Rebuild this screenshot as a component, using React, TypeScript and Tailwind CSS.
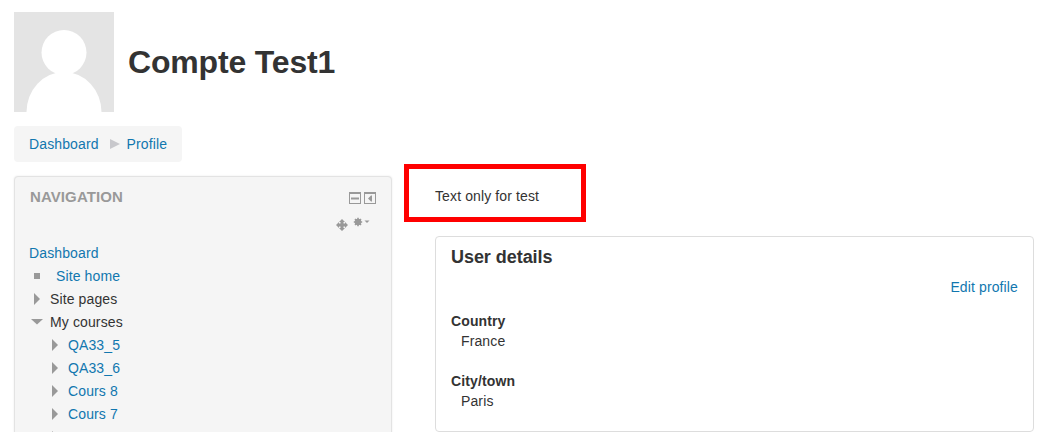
import React from 'react';

const linkClass = 'text-[#1177af]';

const Arrow = ({ open = false }: { open?: boolean }) => (
  <svg width="16" height="16" viewBox="0 0 16 16" className="shrink-0">
    {open ? <polygon points="2,5 14,5 8,10.5" fill="#999" /> : <polygon points="5,2 11,8 5,14" fill="#999" />}
  </svg>
);

const NavRow = ({ label, link = false, open = false, indent = false }: { label?: string; link?: boolean; open?: boolean; indent?: boolean }) => (
  <div className={`flex h-[23px] items-center ${indent ? 'pl-[18px]' : ''}`}>
    <span className="flex w-[21px] shrink-0"><Arrow open={open} /></span>
    {label && <span className={link ? linkClass : 'text-[#333]'}>{label}</span>}
  </div>
);

const BlockIcons = () => (
  <div className="flex h-[60px] w-[50px] flex-col items-end pt-[15px] pr-[1px]">
    <div className="flex gap-[3px]">
      <svg width="12" height="12" viewBox="0 0 12 12">
        <rect x="0.5" y="0.5" width="11" height="11" fill="none" stroke="#999" />
        <rect x="0" y="0" width="12" height="2" fill="#999" />
        <rect x="2" y="5.5" width="8" height="2" fill="#999" />
      </svg>
      <svg width="12" height="12" viewBox="0 0 12 12">
        <rect x="0.5" y="0.5" width="11" height="11" fill="none" stroke="#999" />
        <rect x="0" y="0" width="12" height="2" fill="#999" />
        <polygon points="7,3.5 4,6.5 7,9.5 8,9.5 8,3.5" fill="#999" />
      </svg>
    </div>
    <div className="mt-[13px] flex items-start pr-[6px]">
      <svg width="12" height="12" viewBox="0 0 12 12" className="mt-[2px] mr-[5px]">
        <path d="M6 0 9 3H7.5V4.5H9V3L12 6 9 9V7.5H7.5V9H9L6 12 3 9H4.5V7.5H3V9L0 6 3 3V4.5H4.5V3H3Z" fill="#999" />
      </svg>
      <svg width="10" height="10" viewBox="0 0 10 10">
        <circle cx="5" cy="5" r="2.4" fill="none" stroke="#999" strokeWidth="1.8" />
        <path d="M5 .8v8.4M.8 5h8.4M2 2l6 6M8 2l-6 6" stroke="#999" strokeWidth="1.6" />
      </svg>
      <svg width="6" height="10" viewBox="0 0 6 10" className="ml-[1px]">
        <polygon points="0.5,3.5 5.5,3.5 3,6" fill="#999" />
      </svg>
    </div>
  </div>
);

export default function App() {
  return (
    <div className="h-[432px] overflow-hidden bg-white font-['Liberation_Sans',Arial,sans-serif] text-[14px] leading-[20px] tracking-[0.12px] text-[#333]">
      <div className="relative px-[14px] pt-[12px]">
        <header className="flex items-center gap-[14px]">
          <div className="relative h-[100px] w-[100px] overflow-hidden bg-[#e4e4e4]">
            <svg width="100" height="100" viewBox="0 0 100 100">
              <circle cx="50" cy="40.5" r="22.5" fill="#fff" />
              <ellipse cx="50" cy="100" rx="37.5" ry="40" fill="#fff" />
            </svg>
          </div>
          <h1 className="text-[32px] leading-[40px] font-bold tracking-[-0.17px] text-[#333]">Compte Test1</h1>
        </header>

        <nav className="mt-[14px] flex h-[36px] w-[168px] items-center rounded-[4px] bg-[#f5f5f5] pl-[15px]">
          <a className={linkClass}>Dashboard</a>
          <svg width="12" height="12" viewBox="0 0 12 12" className="mr-[6px] ml-[10px]">
            <polygon points="1,1 11,6 1,11" fill="#c8c8cc" />
          </svg>
          <a className={linkClass}>Profile</a>
        </nav>

        <div className="mt-[14px] flex items-start">
          <aside className="h-[300px] w-[378px] shrink-0 rounded-[4px] border border-[#e3e3e3] bg-[#f5f5f5] px-[14px] shadow-[0_0_2px_rgba(0,0,0,0.1)]">
            <div className="flex justify-between">
              <h2 className="pt-[10px] pl-[1px] text-[15px] font-bold tracking-[0.1px] text-[#999] uppercase">Navigation</h2>
              <BlockIcons />
            </div>
            <div className="mt-[4px]">
              <div className="flex h-[23px] items-center"><a className={linkClass}>Dashboard</a></div>
              <div className="flex h-[23px] items-center">
                <span className="ml-[5px] h-[6px] w-[6px] bg-[#999]" />
                <a className={`ml-[16px] ${linkClass}`}>Site home</a>
              </div>
              <NavRow label="Site pages" />
              <NavRow label="My courses" open />
              <NavRow label="QA33_5" link indent />
              <NavRow label="QA33_6" link indent />
              <NavRow label="Cours 8" link indent />
              <NavRow label="Cours 7" link indent />
              <NavRow indent />
            </div>
          </aside>

          <main className="ml-[43px] min-w-0 flex-1">
            <p className="pt-[10px]">Text only for test</p>
            <section className="mt-[30px] h-[196px] rounded-[4px] border border-[#ddd] px-[15px]">
              <h3 className="pt-[9px] text-[18px] leading-[22px] font-bold tracking-[-0.05px] text-[#333]">User details</h3>
              <div className="mt-[9px] text-right"><a className={linkClass}>Edit profile</a></div>
              <dl className="mt-[14px]">
                <dt className="font-bold">Country</dt>
                <dd className="pl-[10px]">France</dd>
                <dt className="mt-[20px] font-bold">City/town</dt>
                <dd className="pl-[10px]">Paris</dd>
              </dl>
            </section>
          </main>
        </div>

        {/* annotation drawn over the page */}
        <div className="absolute top-[164px] left-[404px] h-[58px] w-[182px] border-[5px] border-[#ff0000]" />
      </div>
    </div>
  );
}
